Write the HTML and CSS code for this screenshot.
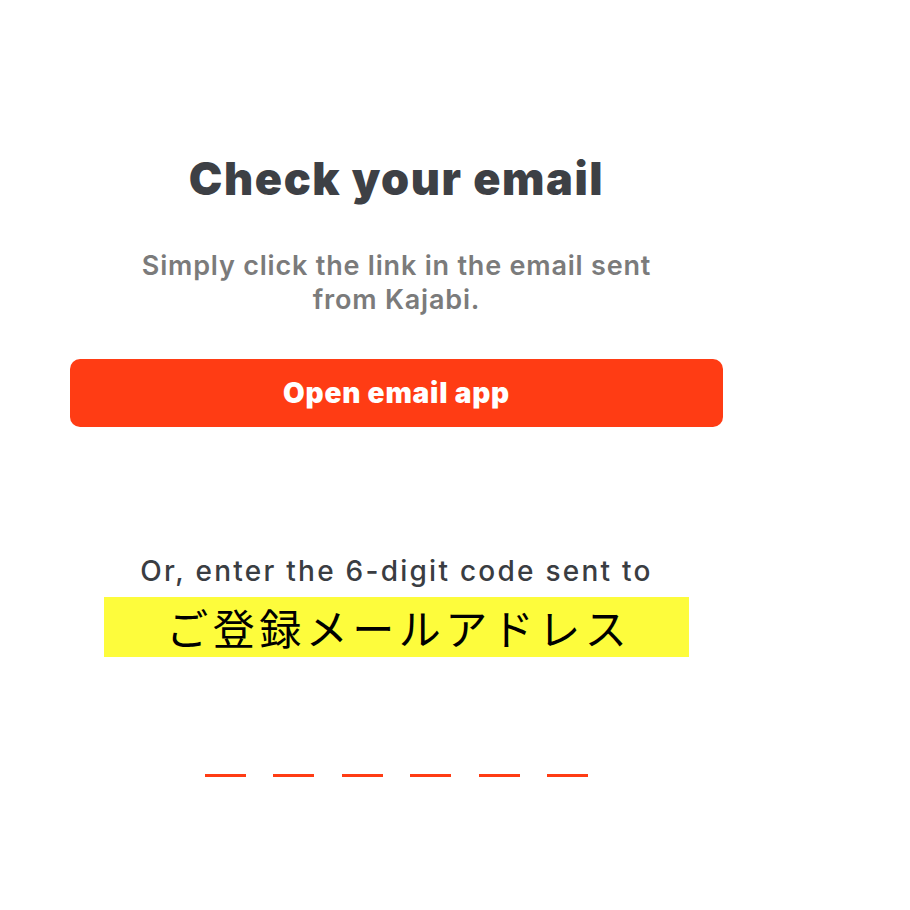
FILE: index.html
```html
<!DOCTYPE html>
<html lang="ja">
<head>
    <meta charset="UTF-8">
    <meta name="viewport" content="width=device-width, initial-scale=1.0">
    <title>Check your email</title>
    <link rel="stylesheet" href="styles.css">
</head>
<body>
    <div class="verify">
        <h1 class="verify-title">Check your email</h1>
        <p class="verify-text">Simply click the link in the email sent from Kajabi.</p>
        <button class="open-btn">Open email app</button>

        <p class="code-label">Or, enter the 6-digit code sent to</p>
        <div class="email-mark">ご登録メールアドレス</div>

        <!-- поля для кода -->
        <div class="code-inputs">
            <span class="code-dash"></span>
            <span class="code-dash"></span>
            <span class="code-dash"></span>
            <span class="code-dash"></span>
            <span class="code-dash"></span>
            <span class="code-dash"></span>
        </div>
    </div>
</body>
</html>
```

FILE: styles.css
```css
body { margin: 0; background: #fff; font-family: Inter, "Noto Sans", sans-serif; }
.verify { width: 653px; margin-left: 70px; padding-top: 152px; display: flex; flex-direction: column; align-items: center; text-align: center; }
.verify-title { margin: 0; font-size: 45px; line-height: 53px; font-weight: 900; color: #3d4045; letter-spacing: 1.55px; }
.verify-text { margin: 44px 0 0; width: 560px; font-size: 27px; line-height: 34px; font-weight: 600; color: #7b7b7b; letter-spacing: 0.8px; }
.open-btn { margin-top: 42px; width: 100%; height: 68px; border: none; border-radius: 10px; background: #ff3c14; color: #fff; font-family: Inter, sans-serif; font-size: 28px; font-weight: 900; letter-spacing: 0.8px; cursor: pointer; }
.code-label { margin: 126px 0 0; font-size: 28px; line-height: 36px; font-weight: 500; color: #3a3d42; letter-spacing: 2.25px; }
.email-mark { margin-top: 8px; width: 585px; height: 60px; padding-left: 4.5px; box-sizing: border-box; background: #fdfc3c; color: #000; font-family: "Noto Sans CJK JP", sans-serif; font-size: 42px; line-height: 60px; letter-spacing: 4.5px; }
.code-inputs { margin-top: 117px; display: flex; gap: 27.6px; }
.code-dash { width: 41px; height: 3px; background: #ff3c14; }
```
